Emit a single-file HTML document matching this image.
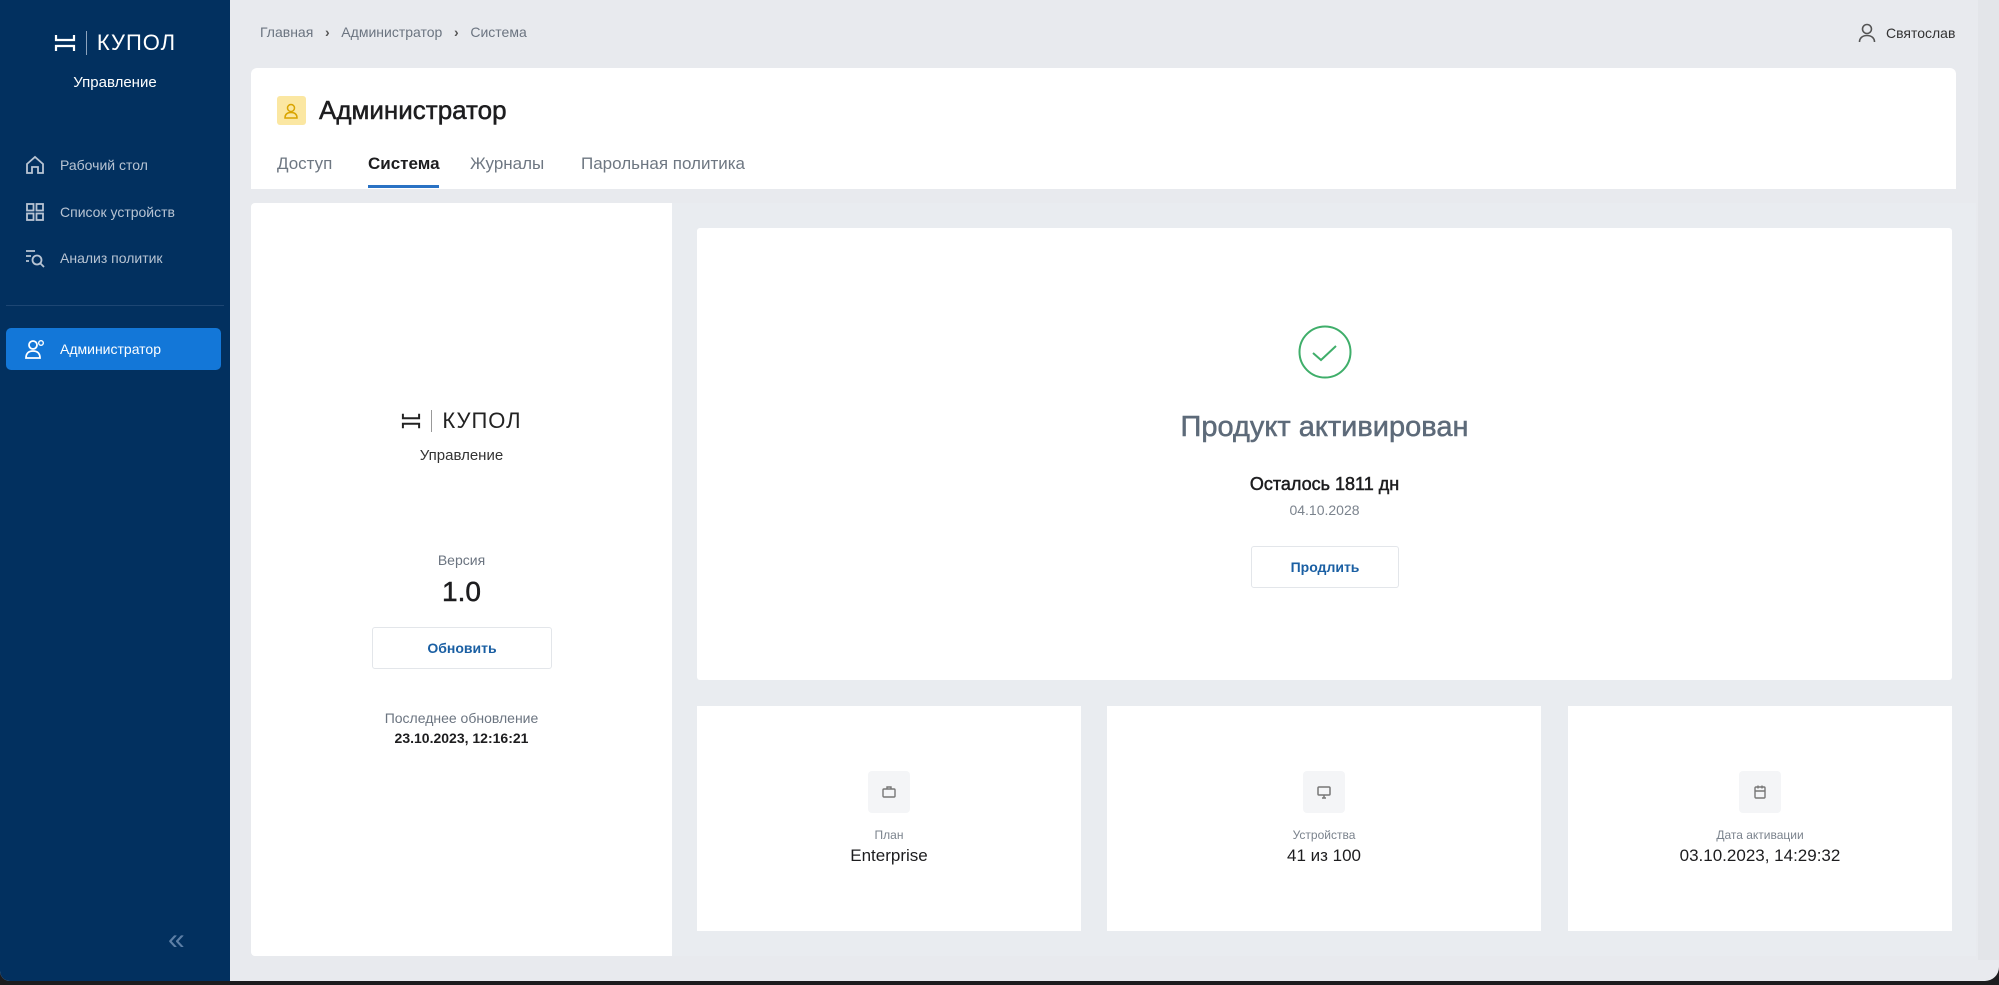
<!DOCTYPE html>
<html><head><meta charset="utf-8"><style>
*{box-sizing:border-box;margin:0;padding:0}
body{width:1999px;height:985px;overflow:hidden;background:#1c1c1e;font-family:"Liberation Sans",sans-serif;position:relative}
.abs{position:absolute}
#app{position:absolute;left:0;top:0;width:1999px;height:981px;background:#e8eaee;border-radius:0 0 14px 10px;overflow:hidden}
#side{position:absolute;left:0;top:0;width:230px;height:981px;background:#02305f}
.logo{display:flex;align-items:center;justify-content:center;gap:10px;font-size:22px;letter-spacing:1px}
.nav{position:absolute;left:24px;color:#b8c4d3;font-size:14px;display:flex;align-items:center;gap:14px}
.card{position:absolute;background:#fff}
.c{text-align:center;position:absolute;left:0;right:0}
.med{-webkit-text-stroke:0.5px currentColor}
.btn{position:absolute;background:#fff;border:1px solid #e3e6ea;border-radius:3px;color:#1a5fa3;font-weight:bold;font-size:14px;display:flex;align-items:center;justify-content:center}
.ib{position:absolute;width:42px;height:42px;background:#f4f5f7;border-radius:4px;left:50%;margin-left:-21px;top:65px;display:flex;align-items:center;justify-content:center}
</style></head><body>
<div id="app">
<div id="side">
  <div class="abs logo" style="left:0;right:0;top:30px;color:#fff">
    <svg width="22" height="20" viewBox="0 0 22 20"><path d="M2 2v5h18V2M2 18v-5h18v5" stroke="#fff" stroke-width="2.2" fill="none"/></svg>
    <span style="width:1px;height:24px;background:#8da3bd"></span><span>КУПОЛ</span></div>
  <div class="c" style="top:74px;color:#fff;font-size:15px">Управление</div>
  <div class="nav" style="top:154px"><svg width="22" height="22" viewBox="0 0 22 22"><path d="M3 10L11 3l8 7v9h-5v-6H8v6H3z" stroke="#b8c4d3" stroke-width="1.8" fill="none"/></svg>Рабочий стол</div>
  <div class="nav" style="top:201px"><svg width="22" height="22" viewBox="0 0 22 22" fill="none" stroke="#b8c4d3" stroke-width="1.8"><rect x="3" y="3" width="6.5" height="6.5"/><rect x="12.5" y="3" width="6.5" height="6.5"/><rect x="3" y="12.5" width="6.5" height="6.5"/><rect x="12.5" y="12.5" width="6.5" height="6.5"/></svg>Список устройств</div>
  <div class="nav" style="top:247px"><svg width="22" height="22" viewBox="0 0 22 22" fill="none" stroke="#b8c4d3" stroke-width="1.8"><path d="M2 4h9M2 9h5M2 14h3"/><circle cx="13" cy="13" r="4.5"/><path d="M16.5 16.5L20 20"/></svg>Анализ политик</div>
  <div class="abs" style="left:6px;right:6px;top:305px;height:1px;background:#1d4673"></div>
  <div class="abs" style="left:6px;width:215px;top:328px;height:42px;background:#1377d8;border-radius:5px"></div>
  <div class="nav" style="top:338px;color:#fff"><svg width="22" height="22" viewBox="0 0 22 22" fill="none" stroke="#fff" stroke-width="1.8"><circle cx="9" cy="7" r="4"/><path d="M2 20c0-5 3-7 7-7s7 2 7 7z"/><circle cx="17" cy="5" r="2.3" stroke-width="1.4"/></svg>Администратор</div>
  <div class="abs" style="left:168px;top:928px;color:#5d7fa6;font-size:30px;line-height:24px">«</div>
</div>
<div class="abs" style="left:260px;top:24px;font-size:14px;color:#6b7480">Главная &nbsp;&nbsp;<b style="color:#555">›</b>&nbsp;&nbsp; Администратор &nbsp;&nbsp;<b style="color:#555">›</b>&nbsp;&nbsp; Система</div>
<div class="abs" style="left:1858px;top:23px;font-size:14px;color:#333;display:flex;align-items:center;gap:10px"><svg width="18" height="20" viewBox="0 0 18 20" fill="none" stroke="#555" stroke-width="1.6"><circle cx="9" cy="6" r="4.5"/><path d="M1.5 19c0-4 3-6.5 7.5-6.5s7.5 2.5 7.5 6.5"/></svg>Святослав</div>
<div class="abs" style="left:1978px;top:0;width:21px;height:960px;background:#e3e5e9"></div>
<div class="card" style="left:251px;top:68px;width:1705px;height:121px;border-radius:6px 6px 0 0">
  <div class="abs" style="left:26px;top:28px;width:29px;height:29px;background:#fbe7a2;border-radius:3px;display:flex;align-items:center;justify-content:center"><svg width="18" height="18" viewBox="0 0 18 18" fill="none" stroke="#d9a400" stroke-width="1.5"><circle cx="8" cy="6" r="3.5"/><path d="M2 16c0-4 2.5-5.5 6-5.5s6 1.5 6 5.5z"/></svg></div>
  <div class="abs med" style="left:68px;top:27px;font-size:26px;color:#1d1d1f">Администратор</div>
  <div class="abs" style="left:26px;top:86px;font-size:17px;color:#6e7782">Доступ</div>
  <div class="abs" style="left:117px;top:86px;font-size:17px;color:#1d1d1f;font-weight:bold">Система</div>
  <div class="abs" style="left:117px;top:117px;width:71px;height:3px;background:#2a72c4"></div>
  <div class="abs" style="left:219px;top:86px;font-size:17px;color:#6e7782">Журналы</div>
  <div class="abs" style="left:330px;top:86px;font-size:17px;color:#6e7782">Парольная политика</div>
</div>
<div class="card" style="left:251px;top:203px;width:421px;height:753px;border-radius:4px 0 0 4px">
  <div class="abs logo" style="left:0;right:0;top:205px;color:#222;font-size:22px">
    <svg width="20" height="18" viewBox="0 0 22 20"><path d="M2 2v5h18V2M2 18v-5h18v5" stroke="#222" stroke-width="2.2" fill="none"/></svg>
    <span style="width:1px;height:22px;background:#999"></span><span>КУПОЛ</span></div>
  <div class="c" style="top:244px;font-size:15px;color:#333">Управление</div>
  <div class="c" style="top:349px;font-size:14px;color:#6b7480">Версия</div>
  <div class="c med" style="top:373px;font-size:28px;color:#1d1d1f">1.0</div>
  <div class="btn" style="left:121px;top:424px;width:180px;height:42px">Обновить</div>
  <div class="c" style="top:507px;font-size:14px;color:#6b7480">Последнее обновление</div>
  <div class="c" style="top:527px;font-size:14px;color:#1d1d1f;font-weight:bold">23.10.2023, 12:16:21</div>
</div>
<div class="abs" style="left:672px;top:203px;width:1304px;height:753px;background:#e9ecf0"></div>
<div class="card" style="left:697px;top:228px;width:1255px;height:452px;border-radius:3px">
  <svg class="abs" style="left:600px;top:96px" width="56" height="56" viewBox="0 0 56 56" fill="none" stroke="#3fae6a" stroke-width="2"><circle cx="28" cy="28" r="25.5"/><path d="M16 29l8 7 15-14"/></svg>
  <div class="c med" style="top:183px;font-size:29px;color:#5d6a79">Продукт активирован</div>
  <div class="c med" style="top:246px;font-size:18px;color:#1d1d1f">Осталось 1811 дн</div>
  <div class="c" style="top:274px;font-size:14px;color:#7b838d">04.10.2028</div>
  <div class="btn" style="left:554px;top:318px;width:148px;height:42px">Продлить</div>
</div>
<div class="card" style="left:697px;top:706px;width:384px;height:225px">
  <div class="ib"><svg width="16" height="16" viewBox="0 0 16 16" fill="none" stroke="#777" stroke-width="1.4"><rect x="2" y="5" width="12" height="8" rx="1"/><path d="M6 5V3h4v2"/></svg></div>
  <div class="c" style="top:122px;font-size:12px;color:#7b838d">План</div>
  <div class="c" style="top:140px;font-size:17px;color:#1d1d1f">Enterprise</div>
</div>
<div class="card" style="left:1107px;top:706px;width:434px;height:225px">
  <div class="ib"><svg width="16" height="16" viewBox="0 0 16 16" fill="none" stroke="#777" stroke-width="1.5"><rect x="2" y="3" width="12" height="8" rx="1"/><path d="M6 14h4M8 11v3"/></svg></div>
  <div class="c" style="top:122px;font-size:12px;color:#7b838d">Устройства</div>
  <div class="c" style="top:140px;font-size:17px;color:#1d1d1f">41 из 100</div>
</div>
<div class="card" style="left:1568px;top:706px;width:384px;height:225px">
  <div class="ib"><svg width="16" height="16" viewBox="0 0 16 16" fill="none" stroke="#777" stroke-width="1.4"><rect x="3" y="3" width="10" height="11" rx="1"/><path d="M3 7h10M6 1.5v3M10 1.5v3"/></svg></div>
  <div class="c" style="top:122px;font-size:12px;color:#7b838d">Дата активации</div>
  <div class="c" style="top:140px;font-size:17px;color:#1d1d1f">03.10.2023, 14:29:32</div>
</div>
</div>
</body></html>
